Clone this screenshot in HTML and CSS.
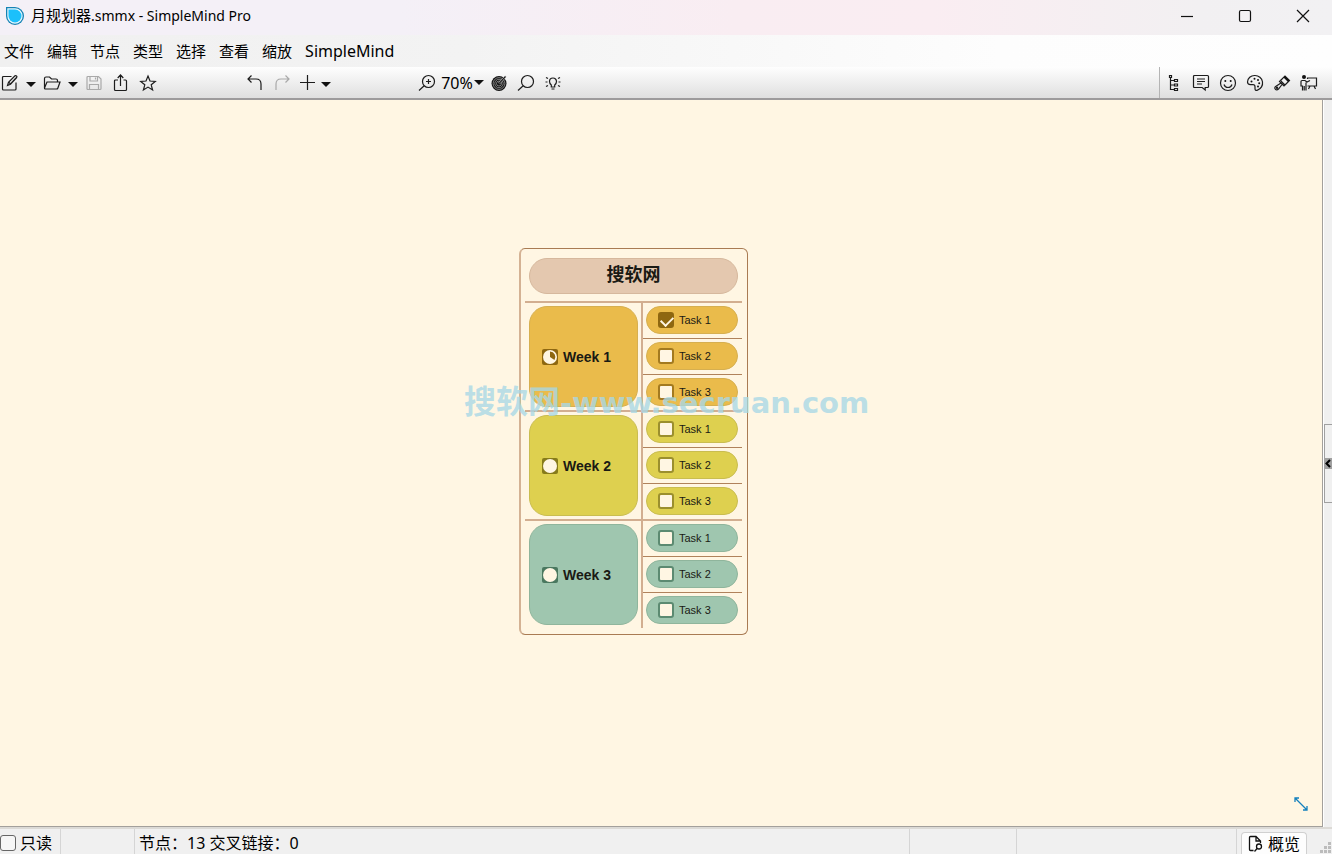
FILE: index.html
```html
<!DOCTYPE html>
<html lang="zh-CN">
<head>
<meta charset="utf-8">
<title>月规划器.smmx - SimpleMind Pro</title>
<link rel="stylesheet" href="styles.css">
</head>
<body>
<header class="titlebar">
  <svg class="logo" width="20" height="20" viewBox="0 0 20 20"><path d="M1 1h9a9 9 0 1 1-9 9z" fill="#1583b5"/><path d="M2.300 2.300h7.700a7.700 7.700 0 1 1-7.700 7.700z" fill="#e8f7fd"/><path d="M3.500 3.500h6.500a6.500 6.500 0 1 1-6.500 6.500z" fill="#1cc0fb"/></svg>
  <h1 class="title"><span class="title-name">月规划器</span>.smmx - SimpleMind Pro</h1>
  <div class="window-buttons">
    <button class="window-button" aria-label="最小化"><svg width="14" height="14" viewBox="0 0 14 14"><path d="M1 7.500h12"/></svg></button>
    <button class="window-button" aria-label="最大化"><svg width="14" height="14" viewBox="0 0 14 14"><rect x="1.500" y="1.500" width="11" height="11" rx="1.500"/></svg></button>
    <button class="window-button" aria-label="关闭"><svg width="14" height="14" viewBox="0 0 14 14"><path d="M1 1l12 12M13 1L1 13"/></svg></button>
  </div>
</header>
<nav class="menubar">
  <button class="menu">文件</button><button class="menu">编辑</button><button class="menu">节点</button><button class="menu">类型</button><button class="menu">选择</button><button class="menu">查看</button><button class="menu">缩放</button><button class="menu menu-app">SimpleMind</button>
</nav>
<div class="toolbar">
  <div class="tools tools-file">
    <button class="tool" aria-label="新建"><svg width="18" height="18" viewBox="0 0 18 18"><path d="M10.500 2.500H2.500Q1.500 2.500 1.500 3.500v11.500Q1.500 16 2.500 16h11.500q1 0 1-1V8.500"/><path d="M6.500 11.500l1-3.300L14 1.800q.7-.5 1.500.2t.2 1.500L9.500 10.300zM8 8.500l1.500 1.500 5.500-6"/></svg></button>
    <button class="tool tool-caret" aria-label="新建选项"><svg width="10" height="5" viewBox="0 0 10 5"><path class="solid" d="M0 0h10L5 5z"/></svg></button>
    <button class="tool" aria-label="打开"><svg width="18" height="18" viewBox="0 0 18 18"><path d="M1.500 14V4.500Q1.500 3 3 3h3.500l2 2H13q1.500 0 1.500 1.500V8M1.500 14L4 8h13l-2.200 6.200q-.3.800-1.300.8h-11Q1.500 15 1.500 14z"/></svg></button>
    <button class="tool tool-caret" aria-label="打开选项"><svg width="10" height="5" viewBox="0 0 10 5"><path class="solid" d="M0 0h10L5 5z"/></svg></button>
    <button class="tool tool-dim" aria-label="保存" disabled><svg width="18" height="18" viewBox="0 0 18 18"><path d="M3 2.500h10.500l2.500 2.500v9.500q0 1-1 1H3q-1 0-1-1v-11q0-1 1-1zM5 2.500v4.500h7.500V2.500M4.500 15.500v-5h9v5M10.500 3.500v2"/></svg></button>
    <button class="tool" aria-label="分享"><svg width="18" height="18" viewBox="0 0 18 18"><path d="M6 6H3.500Q2.500 6 2.500 7v8.500Q2.500 16.500 3.500 16.500h10q1 0 1-1V7Q14.500 6 13.500 6H11.500M8.500 12V1.500M5.700 4L8.500 1l2.800 3"/></svg></button>
    <button class="tool" aria-label="收藏"><svg width="18" height="18" viewBox="0 0 18 18"><path d="M9 2l2 5 5.300.4-4.100 3.400 1.400 5.200L9 13.100 4.400 16l1.400-5.200-4.100-3.400L7 7z"/></svg></button>
  </div>
  <div class="tools">
    <button class="tool" aria-label="撤销"><svg width="18" height="18" viewBox="0 0 18 18"><path d="M5.500 1.500L2 5l3.500 3.500M2 5h8q5 0 5 5v6"/></svg></button>
    <button class="tool tool-dim" aria-label="重做" disabled><svg width="18" height="18" viewBox="0 0 18 18"><path d="M12.500 1.500L16 5l-3.500 3.500M16 5H8q-5 0-5 5v6"/></svg></button>
    <button class="tool tool-tight" aria-label="添加"><svg width="18" height="18" viewBox="0 0 18 18"><path d="M9.500 1v15M2 8.500h15"/></svg></button>
    <button class="tool tool-caret" aria-label="添加选项"><svg width="10" height="5" viewBox="0 0 10 5"><path class="solid" d="M0 0h10L5 5z"/></svg></button>
  </div>
  <div class="tools">
    <button class="tool" aria-label="放大"><svg width="18" height="18" viewBox="0 0 18 18"><circle cx="10.500" cy="7.500" r="6"/><path d="M6.200 11.800L1 16.500M10.500 5v5M8 7.500h5"/></svg></button>
    <button class="tool tool-zoom">70%<svg width="10" height="5" viewBox="0 0 10 5"><path class="solid" d="M0 0h10L5 5z"/></svg></button>
    <button class="tool" aria-label="聚焦"><svg width="18" height="18" viewBox="0 0 18 18"><circle class="solid" cx="9" cy="9.500" r="7.500"/><g stroke="#aaa" stroke-width=".7"><circle cx="9" cy="9.500" r="5.900"/><circle cx="9" cy="9.500" r="4.200"/><circle cx="9" cy="9.500" r="2.500"/></g><path d="M9 9.500l7-7.500" stroke="#ddd" stroke-width="2"/><path d="M9 9.500l6.500-7"/></svg></button>
    <button class="tool" aria-label="搜索"><svg width="18" height="18" viewBox="0 0 18 18"><circle cx="10.500" cy="7.500" r="6"/><path d="M6.200 11.800L1 16.500"/></svg></button>
    <button class="tool" aria-label="提示"><svg width="18" height="18" viewBox="0 0 18 18"><path d="M7.300 13v-2Q5.500 9.500 5.500 7.500a3.500 3.500 0 0 1 7 0q0 2-1.800 3.500v2zM7.500 15h3M2 3.500l2 1M1.500 8H3.500M2 12.500l2-1M16 3.500l-2 1M16.500 8H14.500M16 12.500l-2-1"/></svg></button>
  </div>
  <div class="tools tools-panel">
    <button class="tool" aria-label="大纲"><svg width="18" height="18" viewBox="0 0 18 18"><path d="M4.500 1.500h2v2h-2zM5.500 3.500v12h4M5.500 6.500h4M5.500 11h4M9.500 5.500h3v2h-3zM9.500 10h3v2h-3zM9.500 14.500h3v2h-3z"/></svg></button>
    <button class="tool" aria-label="备注"><svg width="18" height="18" viewBox="0 0 18 18"><path d="M2.500 1.500h13q1 0 1 1v10q0 1-1 1h-2.300V16l-3-2.500H2.500q-1 0-1-1v-10q0-1 1-1zM5 5h8M5 7.500h8M5 10h5"/></svg></button>
    <button class="tool" aria-label="图标"><svg width="18" height="18" viewBox="0 0 18 18"><circle cx="9" cy="9" r="7.500"/><path d="M5 10.500q1 3 4 3t4-3"/><circle class="solid" cx="6.300" cy="7" r="1"/><circle class="solid" cx="11.700" cy="7" r="1"/></svg></button>
    <button class="tool" aria-label="样式"><svg width="18" height="18" viewBox="0 0 18 18"><path d="M9 1.500a7.500 7.500 0 0 1 2.500 14.600q-2.500.8-2.500-1.400v-2q0-2-2-2H4.500Q1.500 10.500 1.500 8A7 6.500 0 0 1 9 1.500z"/><circle class="solid" cx="5.500" cy="7.500" r="1"/><circle class="solid" cx="8.500" cy="4.700" r="1"/><circle class="solid" cx="12" cy="6" r="1"/><circle class="solid" cx="13.200" cy="9.200" r="1"/><circle class="solid" cx="12" cy="12.500" r="1"/></svg></button>
    <button class="tool" aria-label="格式刷"><svg width="18" height="18" viewBox="0 0 18 18"><path d="M7.500 6.500L12 2l4.500 4.500L12 11M6.500 7.500l1-1L12 11l-1 1zM8 9l-5 3.200q-2 1.300-.7 2.900t3.200-.1L9 10.500"/><path class="solid" d="M10.500 3.500L12 2l4.500 4.500L15 8z"/><circle cx="4" cy="13.700" r=".6"/></svg></button>
    <button class="tool" aria-label="演示"><svg width="18" height="18" viewBox="0 0 18 18"><circle class="solid" cx="4" cy="3" r="2"/><path d="M2.500 16.500V12H1V7.500Q1 6.500 2 6.500h3l2 1.500 3-1.500M6 8.500v8M4.200 12v4.500M7.500 5V4h9v8H7.500M10 12L8.500 15M14 12l1.500 3"/></svg></button>
  </div>
</div>
<div class="workspace">
  <main class="canvas">
    <section class="planner">
      <h2 class="planner-title">搜软网</h2>
      <div class="week week-orange">
        <div class="week-cell"><div class="week-name"><svg width="16" height="16" viewBox="0 0 16 16"><rect class="badge" width="16" height="16" rx="2"/><circle class="disc" cx="8" cy="8" r="7"/><path class="badge" d="M8 8V2.500A5.500 5.500 0 0 1 12.500 11z"/></svg>Week 1</div></div>
        <div class="tasks">
          <div class="task-row"><label class="task"><input type="checkbox" class="check" checked>Task 1</label></div>
          <div class="task-row"><label class="task"><input type="checkbox" class="check">Task 2</label></div>
          <div class="task-row"><label class="task"><input type="checkbox" class="check">Task 3</label></div>
        </div>
      </div>
      <div class="week week-yellow">
        <div class="week-cell"><div class="week-name"><svg width="16" height="16" viewBox="0 0 16 16"><rect class="badge" width="16" height="16" rx="2"/><circle class="disc" cx="8" cy="8" r="7"/></svg>Week 2</div></div>
        <div class="tasks">
          <div class="task-row"><label class="task"><input type="checkbox" class="check">Task 1</label></div>
          <div class="task-row"><label class="task"><input type="checkbox" class="check">Task 2</label></div>
          <div class="task-row"><label class="task"><input type="checkbox" class="check">Task 3</label></div>
        </div>
      </div>
      <div class="week week-green">
        <div class="week-cell"><div class="week-name"><svg width="16" height="16" viewBox="0 0 16 16"><rect class="badge" width="16" height="16" rx="2"/><circle class="disc" cx="8" cy="8" r="7"/></svg>Week 3</div></div>
        <div class="tasks">
          <div class="task-row"><label class="task"><input type="checkbox" class="check">Task 1</label></div>
          <div class="task-row"><label class="task"><input type="checkbox" class="check">Task 2</label></div>
          <div class="task-row"><label class="task"><input type="checkbox" class="check">Task 3</label></div>
        </div>
      </div>
    </section>
    <div class="watermark"><span class="watermark-name">搜软网</span>-www.secruan.com</div>
    <button class="fit" aria-label="适应窗口"><svg width="14" height="14" viewBox="0 0 14 14"><path d="M1 5V1h4M1 1l12 12M13 9v4H9"/></svg></button>
  </main>
  <aside class="side">
    <button class="side-handle" aria-label="展开面板"><span class="side-grip"><svg width="6" height="9" viewBox="0 0 6 9"><path d="M5 1L1.500 4.500 5 8"/></svg></span></button>
  </aside>
</div>
<footer class="status">
  <label class="cell cell-readonly"><input type="checkbox" class="readonly">只读</label>
  <div class="cell cell-gap"></div>
  <div class="cell cell-info">节点：13 交叉链接：0</div>
  <div class="cell cell-small"></div>
  <div class="cell cell-wide"></div>
  <div class="cell-overview"><button class="overview"><svg width="16" height="18" viewBox="0 0 16 18"><path d="M5.500 15.500h-3q-1 0-1-1v-12q0-1 1-1H8L12.500 6v2M8 1.500V6h4.500"/><circle cx="11" cy="11.500" r="2.500"/><path d="M9.300 13.300L6.500 16.500"/></svg>概览</button></div>
  <svg class="grip" width="12" height="12" viewBox="0 0 12 12"><path d="M8 0h3v3H8zM4 4h3v3H4zM8 4h3v3H8zM0 8h3v3H0zM4 8h3v3H4zM8 8h3v3H8z"/></svg>
</footer>
</body>
</html>
```
FILE: styles.css
```css
* { box-sizing: border-box; }

body {
  margin: 0;
  height: 100vh;
  display: flex;
  flex-direction: column;
  overflow: hidden;
  font: 16px/24px "Noto Sans", "Noto Sans CJK SC", sans-serif;
  color: #000;
  background: #f0f0f0;
}

button {
  margin: 0;
  padding: 0;
  border: 0;
  background: none;
  font: inherit;
  color: inherit;
}

svg { display: block; flex: none; }

/* Title bar */
.titlebar {
  flex: none;
  height: 35px;
  display: flex;
  align-items: center;
  padding-left: 5px;
  background: linear-gradient(90deg, #f4f0f7 0%, #f4f0f7 30%, #f9edf2 55%, #faedf2 70%, #f2f0f2 90%, #f2f1f3 100%);
}
.title {
  flex: 1;
  margin: 0 0 5px 6px;
  font-size: 14px;
  font-weight: 400;
}
.logo { margin-bottom: 3px; }
.title-name { font-size: 15px; }
.window-buttons { display: flex; margin-bottom: 3px; }
.window-button {
  width: 58px;
  height: 32px;
  display: flex;
  align-items: center;
  justify-content: center;
}
.window-button svg { fill: none; stroke: #111; stroke-width: 1.2; }

/* Menu bar */
.menubar {
  flex: none;
  height: 32px;
  display: flex;
  align-items: center;
  gap: 13px;
  padding-left: 4px;
  font-size: 15px;
  background: linear-gradient(90deg, #f0f0f0 0%, #f3f3f3 35%, #fdfdfd 75%, #fefefe 100%);
}
.menu-app { font-size: 16px; }

/* Toolbar */
.toolbar {
  flex: none;
  height: 33px;
  display: flex;
  gap: 80px;
  background: linear-gradient(#fefefe, #dfdfdf);
  border-bottom: 2px solid #9d9b9c;
}
.tools { display: flex; }
.tools-file { margin-left: -4px; }
.tools-panel {
  margin-left: auto;
  padding-right: 10px;
  border-left: 1px solid #b4b4b4;
}
.tool {
  width: 27px;
  display: flex;
  align-items: center;
  justify-content: center;
}
.tool-tight { width: 23px; }
.tool-caret { width: 15px; padding-top: 3px; }
.tool-zoom { width: 45px; gap: 1px; }
.tool svg { fill: none; stroke: #1c1c1c; stroke-width: 1.2; }
.tool-dim svg { stroke: #a9a9a9; }
.tool .solid { fill: #111; stroke: none; }

/* Mind map canvas */
.workspace { flex: 1; min-height: 0; display: flex; }
.canvas {
  flex: 1;
  position: relative;
  background: #fff6e3;
  border-right: 1px solid #a3a09c;
  border-bottom: 1px solid #a3a09c;
}
.planner {
  position: absolute;
  left: 519px;
  top: 148px;
  width: 229px;
  padding: 5px 5px 6px 4px;
  border: 1px solid #a97b53;
  border-left: 2px solid #d4b294;
  border-radius: 6px;
  color: #1a1a14;
  font-family: "Liberation Sans", "Noto Sans CJK SC", sans-serif;
}
.planner-title {
  height: 36px;
  margin: 4px 4px 7px;
  border: 1px solid #d6b89d;
  border-radius: 18px;
  background: #e4c8af;
  font-size: 18px;
  line-height: 32px;
  text-align: center;
}
.week {
  display: flex;
  border-top: 2px solid #d2ae90;
}
.week-orange { --fill: #eabb4b; --edge: #d6af50; --mark: #8e6710; --box: #a37a20; }
.week-yellow { --fill: #ded04f; --edge: #c9bd50; --mark: #877b1b; --box: #9b8f2e; }
.week-green { --fill: #9fc6af; --edge: #8fb59c; --mark: #4a785f; --box: #5c8a71; }
.week-cell {
  flex: 1;
  display: flex;
  padding: 3px 3px 3px 4px;
}
.week-name {
  flex: 1;
  display: flex;
  align-items: center;
  gap: 5px;
  padding-left: 12px;
  border: 1px solid var(--edge);
  border-radius: 18px;
  background: var(--fill);
  font-size: 14px;
  font-weight: 700;
}
.badge { fill: var(--mark); }
.disc { fill: #fff6e3; }
.tasks {
  width: 101px;
  border-left: 2px solid #d2ae90;
}
.task-row { padding: 3px 4px 4px 3px; }
.task-row + .task-row { border-top: 1px solid #b0825b; }
.task {
  height: 28px;
  display: flex;
  align-items: center;
  gap: 5px;
  padding-left: 11px;
  border: 1px solid var(--edge);
  border-radius: 14px;
  background: var(--fill);
  font-size: 11px;
}
.check {
  appearance: none;
  width: 16px;
  height: 16px;
  margin: 0;
  border: 2px solid var(--box);
  border-radius: 3px;
  background: #fff6e3;
}
.check:checked { background: var(--mark); border-color: var(--mark); }
.check:checked::before {
  content: "";
  display: block;
  width: 10px;
  height: 6px;
  margin: 2px 0 0 1px;
  border: solid #fff6e3;
  border-width: 0 0 2px 2px;
  transform: rotate(-45deg);
}
.watermark {
  position: absolute;
  left: 464px;
  top: 284px;
  color: rgba(168, 216, 230, .8);
  font: 700 29px/36px "DejaVu Sans", "Noto Sans CJK SC", sans-serif;
  white-space: nowrap;
  pointer-events: none;
}
.watermark-name { font-size: 32px; }
.fit {
  position: absolute;
  right: 14px;
  bottom: 15px;
}
.fit svg { fill: none; stroke: #1480bd; stroke-width: 1.3; }

/* Collapsed side panel */
.side {
  width: 9px;
  display: flex;
  align-items: center;
  border-left: 1px solid #fff;
}
.side-handle {
  width: 8px;
  height: 79px;
  display: flex;
  align-items: center;
  border: 1px solid #a0a0a0;
  border-right: 0;
}
.side-grip {
  width: 8px;
  height: 11px;
  display: flex;
  align-items: center;
  background: #a0a0a0;
}
.side-grip svg { fill: none; stroke: #000; stroke-width: 2; }

/* Status bar */
.status {
  flex: none;
  height: 27px;
  display: flex;
  border-top: 2px solid #dcdad6;
}
.cell {
  display: flex;
  align-items: center;
  padding-top: 3px;
  border-right: 1px solid #d5d5d5;
  white-space: nowrap;
}
.cell-readonly { width: 61px; gap: 4px; }
.cell-gap { width: 74px; }
.cell-info { flex: 1; padding-left: 4px; }
.cell-small { width: 107px; }
.cell-wide { width: 220px; }
.readonly {
  appearance: none;
  width: 16px;
  height: 16px;
  margin: 0;
  border: 1px solid #666;
  border-radius: 3px;
  background: #f6f6f6;
}
.cell-overview { display: flex; padding: 3px 0 0 4px; }
.overview {
  width: 66px;
  display: flex;
  align-items: center;
  justify-content: center;
  gap: 4px;
  border: 1px solid #d0d0d0;
  border-bottom: 0;
  border-radius: 4px 4px 0 0;
  background: #fdfdfd;
}
.overview svg { fill: none; stroke: #111; stroke-width: 1.3; }
.grip { align-self: flex-end; margin-left: 13px; fill: #bcbcbc; }
```
